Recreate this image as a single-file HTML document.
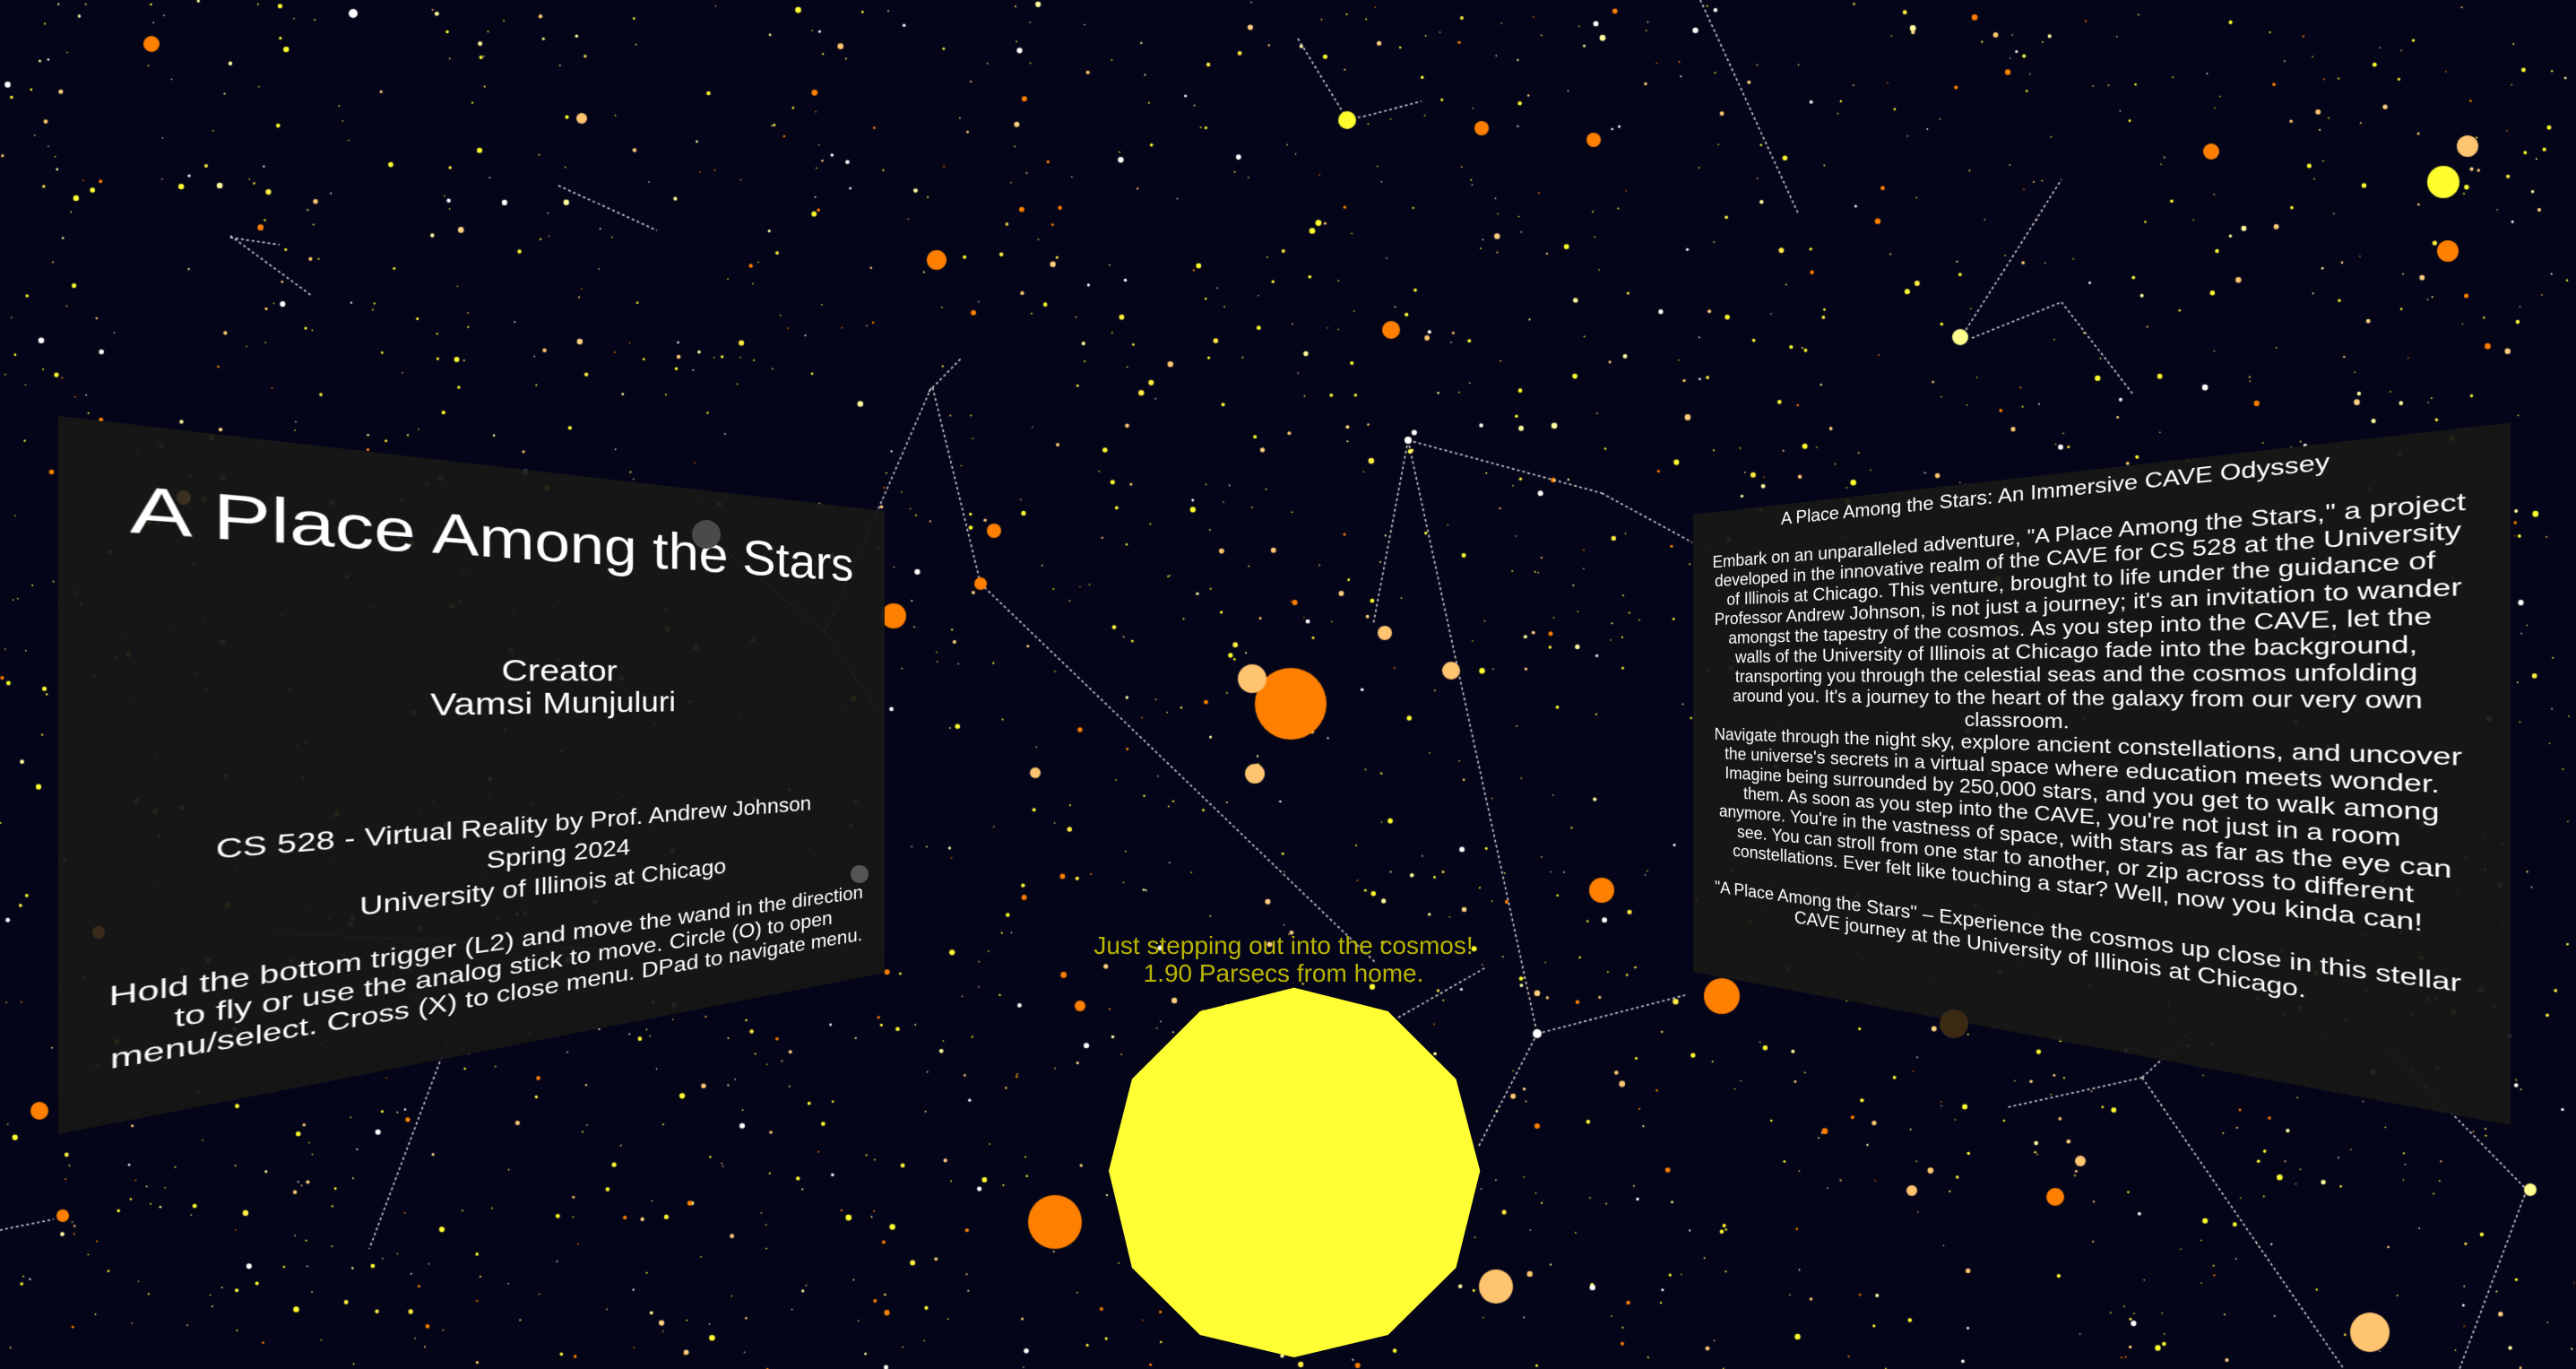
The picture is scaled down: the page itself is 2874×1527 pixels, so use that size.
<!DOCTYPE html>
<html><head><meta charset="utf-8">
<style>
html,body{margin:0;padding:0;width:2874px;height:1527px;overflow:hidden;background:#050519;}
#c{position:absolute;left:0;top:0;}
.panel{position:absolute;transform-origin:0 0;background:rgba(22,22,22,0.94);font-family:"Liberation Sans",Arial,sans-serif;color:#fff;}
.panel div{position:absolute;left:0;width:100%;text-align:center;white-space:nowrap;}
#ctext{position:absolute;left:1132px;width:600px;top:1039px;text-align:center;font-family:"Liberation Sans",Arial,sans-serif;font-size:28px;line-height:31px;color:#b8b400;}
svg{position:absolute;left:0;top:0;}
</style></head>
<body>
<canvas id="c" width="2874" height="1527"></canvas>

<div class="panel" style="left:65px;top:464px;width:975px;height:801px;transform:matrix3d(1.47077,0.16913,0,0.00056954,0,1,0,0,0,0,1,0,0,0,0,1);">
  <div style="top:59px;font-size:78px;line-height:78px;">A Place Among the Stars</div>
  <div style="top:258px;font-size:43px;line-height:46px;">Creator<br>Vamsi Munjuluri</div>
  <div style="top:475px;font-size:33px;line-height:44px;">CS 528 - Virtual Reality by Prof. Andrew Johnson<br>Spring 2024<br>University of Illinois at Chicago</div>
  <div style="top:637px;font-size:32px;line-height:36px;">Hold the bottom trigger (L2) and move the wand in the direction<br>to fly or use the analog stick to move. Circle (O) to open<br>menu/select. Cross (X) to close menu. DPad to navigate menu.</div>
</div>

<div class="panel" style="left:1889px;top:574px;width:648px;height:510px;transform:matrix3d(0.91605,-0.10293,0,-0.00053873,0,1,0,0,0,0,1,0,0,0,0,1);">
  <div style="top:5px;font-size:18px;line-height:21px;">A Place Among the Stars: An Immersive CAVE Odyssey</div>
  <div style="top:45px;font-size:18px;line-height:21px;">Embark on an unparalleled adventure, "A Place Among the Stars," a project<br>developed in the innovative realm of the CAVE for CS 528 at the University<br>of Illinois at Chicago. This venture, brought to life under the guidance of<br>Professor Andrew Johnson, is not just a journey; it's an invitation to wander<br>amongst the tapestry of the cosmos. As you step into the CAVE, let the<br>walls of the University of Illinois at Chicago fade into the background,<br>transporting you through the celestial seas and the cosmos unfolding<br>around you. It's a journey to the heart of the galaxy from our very own<br>classroom.<br>Navigate through the night sky, explore ancient constellations, and uncover<br>the universe's secrets in a virtual space where education meets wonder.<br>Imagine being surrounded by 250,000 stars, and you get to walk among<br>them. As soon as you step into the CAVE, you're not just in a room<br>anymore. You're in the vastness of space, with stars as far as the eye can<br>see. You can stroll from one star to another, or zip across to different<br>constellations. Ever felt like touching a star? Well, now you kinda can!<br><br>"A Place Among the Stars" – Experience the cosmos up close in this stellar<br>CAVE journey at the University of Illinois at Chicago.</div>
</div>

<svg width="2874" height="1527">
  <circle cx="788" cy="596" r="16" fill="#4a4a4a"/>
  <circle cx="959" cy="975" r="10" fill="#555"/>
  <circle cx="205" cy="555" r="8" fill="#3a3020"/>
  <circle cx="110" cy="1040" r="7" fill="#3a2a1a"/>
  <circle cx="2180" cy="1142" r="16" fill="#3a2a14"/>
  <polygon fill="#ffff33" points="1443.7,1101.6 1548.6,1128 1624.5,1203.6 1651.3,1306 1624.5,1414 1548.6,1489 1443.7,1514 1338.8,1489 1262.9,1414 1237,1306 1262.9,1203.6 1338.8,1128"/>
</svg>

<div id="ctext">Just stepping out into the cosmos!<br>1.90 Parsecs from home.</div>

<script>
(function(){
var c=document.getElementById('c').getContext('2d');
c.fillStyle='#050519';c.fillRect(0,0,2874,1527);
var s=12345;function r(){s=(s*1103515245+12345)%2147483648;return s/2147483648;}
var cols=['#ffff30','#ffff30','#ffff30','#ffee40','#ffc870','#ffd080','#ffffff','#ff8000','#ffffa0'];
for(var i=0;i<2200;i++){
  var x=r()*2874,y=r()*1527,k=cols[Math.floor(r()*cols.length)];
  var rad=0.8+Math.pow(r(),3)*2.6;
  c.fillStyle=k;c.beginPath();c.arc(x,y,rad,0,7);c.fill();
}
c.strokeStyle='rgba(255,255,255,0.85)';c.lineWidth=1.6;c.setLineDash([3,3]);
var L=[[1094,651,1535,1074],[1571,491,1715,1153],[1571,491,1787,550],[1787,550,1888,605],[1571,491,1532,697],
[1715,1153,1649,1280],[1715,1153,1880,1110],[1560,1135,1658,1079],[1448,43,1503,133],[1503,133,1521,130],[1521,130,1586,113],
[1897,0,2007,240],[2200,377,2300,337],[2190,373,2245,287],[257,263,348,330],[257,265,312,273],[1036,437,1072,400],[623,207,733,257],
[495,1173,412,1393],[0,1372,60,1360],[2390,1202,2615,1527],[2390,1202,2240,1235],[2390,1202,2446,1150],[2663,1168,2819,1327],[2819,1327,2744,1527],
[788,596,920,705],[920,705,985,800],[920,705,1040,430],[700,1060,300,1040],[1094,651,1040,430],[2245,287,2300,200],[2300,337,2380,440]];
L.forEach(function(l){c.beginPath();c.moveTo(l[0],l[1]);c.lineTo(l[2],l[3]);c.stroke();});
var B=[[1440,785,40,'#ff8000'],[1177,1363,30,'#ff8000'],[1921,1111,20,'#ff8000'],[1787,993,14,'#ff8000'],[997,687,14,'#ff8000'],
[1045,290,11,'#ff8000'],[1552,368,10,'#ff8000'],[169,49,9,'#ff8000'],[2467,169,9,'#ff8000'],[2731,280,12,'#ff8000'],[1653,143,8,'#ff8000'],
[1778,156,8,'#ff8000'],[1109,592,8,'#ff8000'],[1094,651,7,'#ff8000'],[44,1239,10,'#ff8000'],[70,1356,7,'#ff8000'],[2293,1335,10,'#ff8000'],[1205,1122,6,'#ff8000'],
[1397,757,16,'#ffc470'],[1400,863,11,'#ffc470'],[1669,1435,19,'#ffc470'],[2644,1486,22,'#ffc470'],[2753,163,12,'#ffc470'],[649,132,6,'#ffc470'],
[1619,748,10,'#ffc470'],[1545,706,8,'#ffc470'],[1155,862,6,'#ffc470'],[2321,1295,6,'#ffc470'],[2133,1328,6,'#ffc470'],
[1503,134,10,'#ffff30'],[2726,203,18,'#ffff30'],[2187,376,9,'#ffff90'],[394,15,5,'#ffffff'],[1571,491,4,'#ffffff'],[1715,1153,5,'#ffffff'],[2823,1327,7,'#ffff90']];
B.forEach(function(b){c.fillStyle=b[3];c.beginPath();c.arc(b[0],b[1],b[2],0,7);c.fill();});
})();
</script>
</body></html>
